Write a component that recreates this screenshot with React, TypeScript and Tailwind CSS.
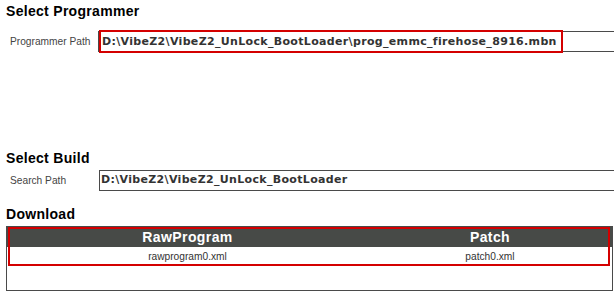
export default function App() {
  const path = 'D:\\VibeZ2\\VibeZ2_UnLock_BootLoader';
  const mono = { fontFamily: '"DejaVu Sans", sans-serif' };
  return (
    <div
      className="w-[614px] h-[292px] overflow-hidden bg-white text-[#333]"
      style={{ fontFamily: '"Liberation Sans", Arial, sans-serif' }}
    >
      <div className="pl-[6px] pt-[1px] h-[20px] leading-[20px] text-[14px] tracking-[0.3px] font-bold text-black">
        Select Programmer
      </div>

      <div className="mt-[11px] flex items-center">
        <div className="w-[98px] pl-[10px] text-[10.2px] text-[#444]">Programmer Path</div>
        <div className="relative flex-1 h-[21px] border-l-2 border-y border-[#4a4a4a] flex items-center">
          <span
            className="relative -ml-[1px] pl-[1px] pr-[4px] h-[23px] leading-[19px] border-2 border-[#d40000] text-[11px] tracking-[0.33px] font-bold text-[#333] whitespace-nowrap"
            style={mono}
          >
            {path}\prog_emmc_firehose_8916.mbn
          </span>
        </div>
      </div>

      <div className="mt-[97px] pl-[6px] h-[18px] leading-[18px] text-[14px] tracking-[0.3px] font-bold text-black">
        Select Build
      </div>

      <div className="mt-[3px] flex items-center">
        <div className="w-[99px] pl-[10px] text-[10.2px] text-[#444]">Search Path</div>
        <div className="flex-1 h-[21px] border-l border-y border-[#4a4a4a] flex items-center pl-[1px]">
          <span className="text-[11px] tracking-[0.33px] font-bold text-[#333] whitespace-nowrap" style={mono}>
            {path}
          </span>
        </div>
      </div>

      <div className="mt-[13px] pl-[6px] h-[20px] leading-[20px] text-[14px] tracking-[0.3px] font-bold text-black">
        Download
      </div>

      <div className="relative ml-[6px] mt-[2px] w-[607px] h-[65px] border border-[#4a4a4a]">
        <div className="flex h-[20px] bg-[#474a47] text-white text-[14px] tracking-[0.4px] font-bold leading-[20px]">
          <div className="w-[361px] text-center">RawProgram</div>
          <div className="flex-1 text-center">Patch</div>
        </div>
        <div className="flex h-[19px] text-[10.2px] leading-[19px] text-[#333]">
          <div className="w-[361px] text-center">rawprogram0.xml</div>
          <div className="flex-1 text-center">patch0.xml</div>
        </div>
        <div className="absolute left-[1px] top-0 w-[602px] h-[39px] border-2 border-[#d40000]" />
      </div>
    </div>
  );
}
